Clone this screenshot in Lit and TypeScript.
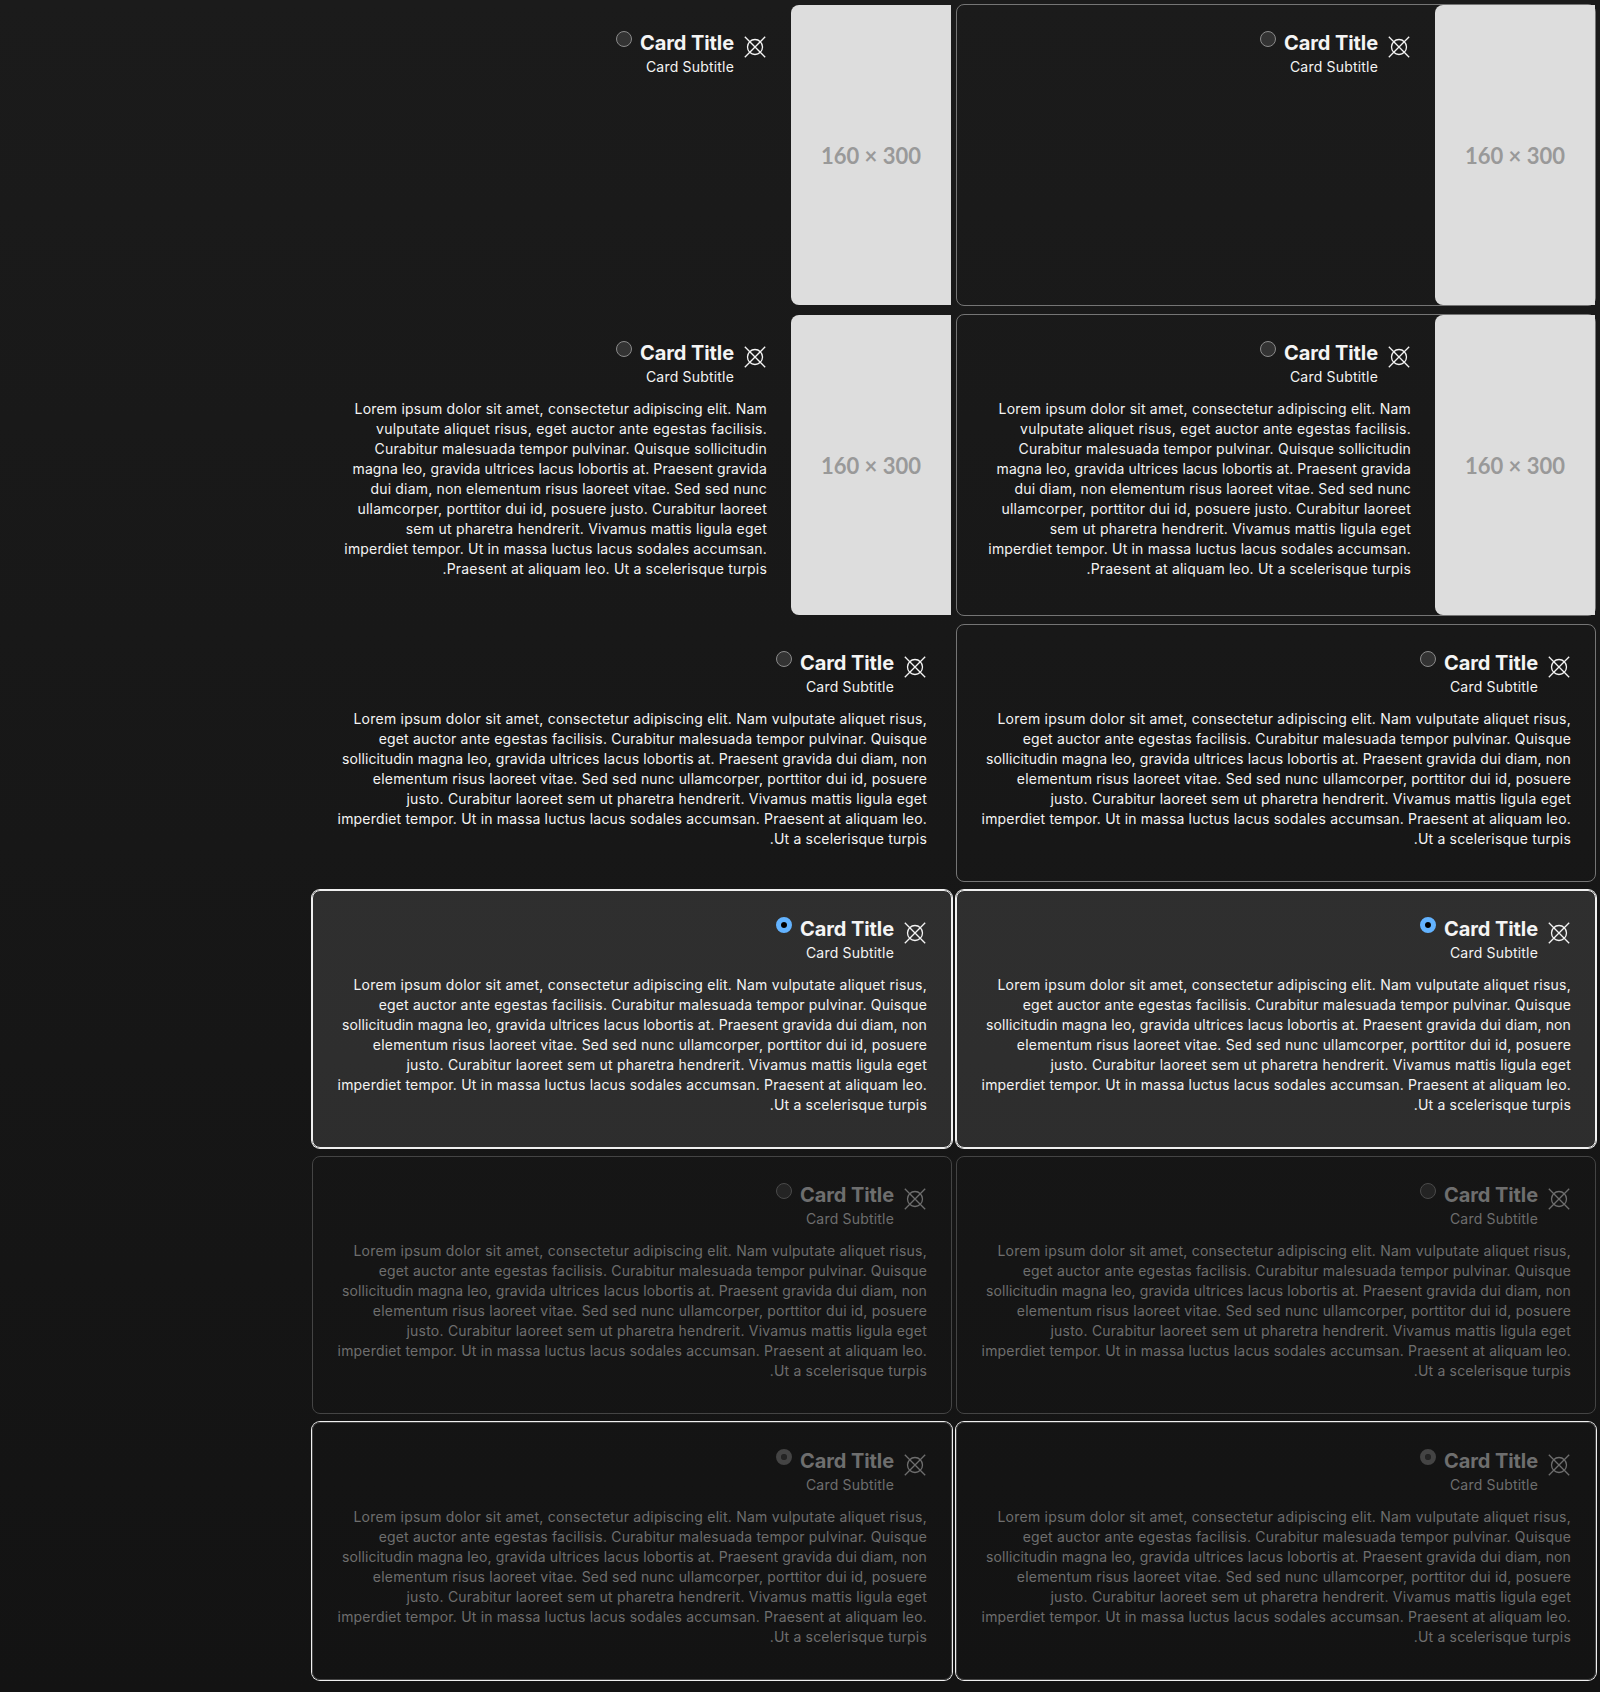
import { LitElement, html, css, nothing } from "lit";
import { customElement, property } from "lit/decorators.js";
import { classMap } from "lit/directives/class-map.js";

type Line = [text: string, tracking: number];

// Phrases stay on one line each; tracking is in pixels.
const NARROW: Line[] = [
  ["Lorem ipsum dolor sit amet, consectetur adipiscing elit. Nam", 0.207],
  ["vulputate aliquet risus, eget auctor ante egestas facilisis.", 0.264],
  ["Curabitur malesuada tempor pulvinar. Quisque sollicitudin", 0.193],
  ["magna leo, gravida ultrices lacus lobortis at. Praesent gravida", 0.115],
  ["dui diam, non elementum risus laoreet vitae. Sed sed nunc", 0.177],
  ["ullamcorper, porttitor dui id, posuere justo. Curabitur laoreet", 0.214],
  ["sem ut pharetra hendrerit. Vivamus mattis ligula eget", 0.24],
  ["imperdiet tempor. Ut in massa luctus lacus sodales accumsan.", 0.19],
  ["Praesent at aliquam leo. Ut a scelerisque turpis.", 0.189],
];

const WIDE: Line[] = [
  ["Lorem ipsum dolor sit amet, consectetur adipiscing elit. Nam vulputate aliquet risus,", 0.235],
  ["eget auctor ante egestas facilisis. Curabitur malesuada tempor pulvinar. Quisque", 0.196],
  ["sollicitudin magna leo, gravida ultrices lacus lobortis at. Praesent gravida dui diam, non", 0.115],
  ["elementum risus laoreet vitae. Sed sed nunc ullamcorper, porttitor dui id, posuere", 0.194],
  ["justo. Curabitur laoreet sem ut pharetra hendrerit. Vivamus mattis ligula eget", 0.216],
  ["imperdiet tempor. Ut in massa luctus lacus sodales accumsan. Praesent at aliquam leo.", 0.185],
  ["Ut a scelerisque turpis.", 0.188],
];

@customElement("select-card")
class SelectCard extends LitElement {
  @property({ type: Boolean }) outlined = false;
  @property({ type: Boolean }) media = false;
  @property({ type: Boolean }) body = false;
  @property({ type: Boolean }) selected = false;
  @property({ type: Boolean }) disabled = false;

  static styles = css`
    :host {
      display: block;
    }
    .card {
      --ink: #f4f4f4;
      box-sizing: border-box;
      height: 100%;
      display: flex;
      border: 1px solid transparent;
      border-radius: 8px;
      color: var(--ink);
      font: 400 14px/20px Inter, "Liberation Sans", sans-serif;
      letter-spacing: 0.19px;
    }
    .outlined {
      border-color: #757575;
    }
    .disabled {
      --ink: #6e6e6e;
      border-color: #444;
    }
    .selected {
      border-color: #f0f0f0;
      background: rgba(255, 255, 255, 0.105);
      box-shadow: 0 0 0 1px #f0f0f0;
    }
    .selected.disabled {
      border-color: #444;
      background: none;
    }
    .media {
      flex: none;
      box-sizing: border-box;
      width: 160px;
      height: 300px;
      padding-top: 1px;
      display: flex;
      align-items: center;
      justify-content: center;
      border-radius: 8px 0 0 8px;
      background: #ddd;
      color: #999;
      font: 700 22px/28px Lato, sans-serif;
      letter-spacing: 0;
    }
    .content {
      flex: 1;
      min-width: 0;
      padding: 24px 24px 32px;
    }
    .header {
      display: flex;
      gap: 8px;
    }
    .icon {
      width: 24px;
      height: 24px;
      margin-top: 6px;
      margin-left: 1px;
      fill: none;
      stroke: var(--ink);
      stroke-width: 1.3;
    }
    .title {
      font-size: 20px;
      line-height: 28px;
      font-weight: 700;
      letter-spacing: -0.1px;
    }
    .radio {
      box-sizing: border-box;
      width: 16px;
      height: 16px;
      margin-top: 2px;
      border: 1px solid #8a8a8a;
      border-radius: 50%;
      background: #333;
    }
    .disabled .radio {
      border-color: #4a4a4a;
      background: #242424;
    }
    .selected .radio {
      border: 5px solid #63b3ff;
      background: #000;
      background-clip: padding-box;
    }
    .selected.disabled .radio {
      border-color: #444;
      background-color: #242424;
    }
    .text {
      margin: 12px 0 0;
    }
    .line {
      white-space: nowrap;
    }
  `;

  render() {
    const lines = this.media ? NARROW : WIDE;
    return html`
      <div
        class=${classMap({
          card: true,
          outlined: this.outlined,
          selected: this.selected,
          disabled: this.disabled,
        })}
      >
        ${this.media ? html`<div class="media" dir="ltr">160 × 300</div>` : nothing}
        <div class="content">
          <div class="header">
            <svg class="icon" viewBox="0 0 24 24">
              <circle cx="12" cy="12" r="7.5" />
              <path d="M1.8 1.8 22.2 22.2M22.2 1.8 1.8 22.2" />
            </svg>
            <div>
              <div class="title">Card Title</div>
              <div>Card Subtitle</div>
            </div>
            <span class="radio"></span>
          </div>
          ${this.body
            ? html`<p class="text">
                ${lines.map(
                  ([text, tracking]) =>
                    html`<span class="line" style="letter-spacing:${tracking}px">${text}</span> `
                )}
              </p>`
            : nothing}
        </div>
      </div>
    `;
  }
}

const ROWS = [
  { media: true, body: false, selected: false, disabled: false },
  { media: true, body: true, selected: false, disabled: false },
  { media: false, body: true, selected: false, disabled: false },
  { media: false, body: true, selected: true, disabled: false },
  { media: false, body: true, selected: false, disabled: true },
  { media: false, body: true, selected: true, disabled: true },
];

@customElement("app-root")
class AppRoot extends LitElement {
  static styles = css`
    :host {
      display: block;
      box-sizing: border-box;
      min-height: 1692px;
      background: linear-gradient(#1b1b1b, #131313);
    }
    .grid {
      display: grid;
      grid-template-columns: 640px 640px;
      gap: 8px 4px;
      padding: 4px;
    }
  `;

  render() {
    return html`
      <div class="grid" dir="rtl">
        ${ROWS.map((r) =>
          [true, false].map(
            (outlined) => html`<select-card
              ?outlined=${outlined}
              ?media=${r.media}
              ?body=${r.body}
              ?selected=${r.selected}
              ?disabled=${r.disabled}
            ></select-card>`
          )
        )}
      </div>
    `;
  }
}
